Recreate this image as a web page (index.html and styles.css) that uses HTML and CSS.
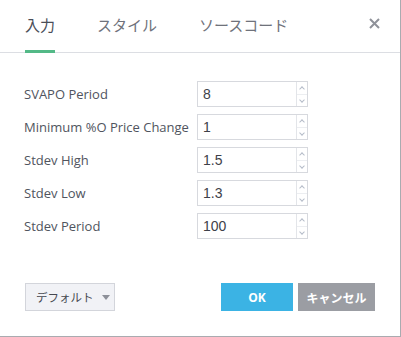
FILE: index.html
```html
<!DOCTYPE html>
<html>
<head>
<meta charset="utf-8">
<link rel="stylesheet" href="styles.css">
</head>
<body>
<div class="dialog">
  <div class="header">
    <div class="tab active">入力</div>
    <div class="tab">スタイル</div>
    <div class="tab">ソースコード</div>
    <div class="close"><svg width="11" height="11" viewBox="0 0 11 11"><path d="M1 1L10 10M10 1L1 10" stroke="#8f929a" stroke-width="2"/></svg></div>
  </div>
  <div class="form">
    <div class="label">SVAPO Period</div>
    <div class="input"><span class="val">8</span><span class="spin"><span class="up"></span><span class="down"></span></span></div>
    <div class="label">Minimum %O Price Change</div>
    <div class="input"><span class="val">1</span><span class="spin"><span class="up"></span><span class="down"></span></span></div>
    <div class="label">Stdev High</div>
    <div class="input"><span class="val">1.5</span><span class="spin"><span class="up"></span><span class="down"></span></span></div>
    <div class="label">Stdev Low</div>
    <div class="input"><span class="val">1.3</span><span class="spin"><span class="up"></span><span class="down"></span></span></div>
    <div class="label">Stdev Period</div>
    <div class="input"><span class="val">100</span><span class="spin"><span class="up"></span><span class="down"></span></span></div>
  </div>
  <div class="footer">
    <div class="btn default">デフォルト<span class="caret"></span></div>
    <div class="spacer"></div>
    <div class="btn ok">OK</div>
    <div class="btn cancel">キャンセル</div>
  </div>
</div>
</body>
</html>
```
FILE: styles.css
```css
html, body {
  margin: 0;
  padding: 0;
  background: #fff;
}
.dialog {
  width: 400px;
  height: 336px;
  border-right: 1px solid #a9abb0;
  border-bottom: 1px solid #a9abb0;
  font-family: "Open Sans", "Noto Sans CJK JP", sans-serif;
  color: #4a4e58;
  display: flex;
  flex-direction: column;
}
.header {
  border-bottom: 1px solid #dcdee3;
  display: flex;
  align-items: center;
  padding-left: 25px;
  gap: 42px;
  position: relative;
  box-sizing: border-box;
  height: 53px;
}
.tab {
  font-family: "Noto Sans CJK JP", sans-serif;
  font-size: 15px;
  color: #6f727b;
  height: 52px;
  line-height: 50px;
  position: relative;
  white-space: nowrap;
}
.tab.active {
  color: #4a4e58;
}
.tab.active::after {
  content: "";
  position: absolute;
  left: 0;
  right: 0;
  bottom: -1px;
  height: 3px;
  background: #53b987;
}
.close {
  position: absolute;
  left: 369px;
  top: 18px;
  width: 11px;
  height: 11px;
  display: flex;
}
.form {
  display: grid;
  grid-template-columns: 173px 111px;
  grid-auto-rows: 26px;
  row-gap: 7px;
  padding: 28px 0 0 24px;
  align-items: center;
}
.label {
  font-size: 13px;
  color: #50545e;
  white-space: nowrap;
}
.input {
  height: 26px;
  box-sizing: border-box;
  border: 1px solid #d7d9de;
  display: flex;
}
.val {
  flex: 1;
  font-family: "Liberation Sans", Arial, sans-serif;
  font-size: 14px;
  color: #3e4149;
  line-height: 24px;
  padding-left: 5px;
}
.spin {
  width: 10px;
  border-left: 1px solid #e3e5e9;
  display: flex;
  flex-direction: column;
}
.up, .down {
  flex: 1;
  position: relative;
}
.up {
  border-bottom: 1px solid #eceef1;
}
.up::before, .down::before {
  content: "";
  position: absolute;
  left: 3px;
  width: 3px;
  height: 3px;
  border-left: 1px solid #b5bcc8;
  border-top: 1px solid #b5bcc8;
}
.up::before {
  top: 5px;
  transform: rotate(45deg);
}
.down::before {
  top: 3px;
  transform: rotate(-135deg);
}
.footer {
  display: flex;
  padding: 44px 25px 0 25px;
  gap: 5px;
  align-items: center;
}
.spacer {
  flex: 1;
}
.btn {
  height: 28px;
  box-sizing: border-box;
  display: flex;
  align-items: center;
  justify-content: center;
  font-family: "Noto Sans CJK JP", sans-serif;
  font-size: 12px;
  white-space: nowrap;
}
.default {
  width: 90px;
  background: #f1f2f6;
  border: 1px solid #d3d5db;
  color: #454850;
  justify-content: flex-start;
  padding-left: 10px;
  font-size: 11.5px;
}
.caret {
  margin-left: 8px;
  width: 0;
  height: 0;
  border-left: 4px solid transparent;
  border-right: 4px solid transparent;
  border-top: 5px solid #8d9099;
}
.ok {
  width: 72px;
  background: #3bb3e4;
  color: #fff;
  font-family: "Open Sans", sans-serif;
  font-weight: 700;
  font-size: 12px;
}
.cancel {
  width: 77px;
  background: #9b9da3;
  color: #fff;
  font-weight: 700;
}
```
